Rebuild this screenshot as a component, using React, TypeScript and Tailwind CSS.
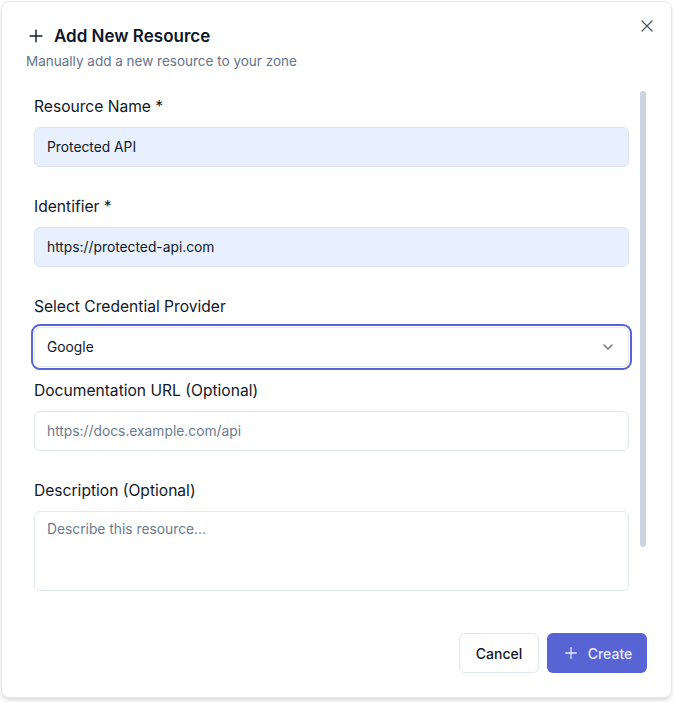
import { Plus, X, ChevronDown } from "lucide-react";

const labelCls = "block text-[15.6px] leading-6 text-[#111827] mb-2";
const inputCls =
  "w-full h-10 rounded-md border px-3 text-[13.8px] text-[#111827] outline-none placeholder:text-[#6b7a90]";

export default function App() {
  return (
    <div className="min-h-screen bg-white p-px font-['Inter',sans-serif]">
      <div className="relative flex h-[697px] w-[671px] flex-col rounded-lg border border-[#e2e8f0] bg-white px-6 pt-[22px] pb-6 shadow-md">
        {/* Close */}
        <button className="absolute right-[14px] top-[14px] text-[#4b5563]">
          <X size={20} strokeWidth={1.5} />
        </button>

        {/* Header */}
        <div className="flex items-center gap-2">
          <Plus size={20} strokeWidth={1.75} className="text-[#111827]" />
          <h2 className="text-[17px] font-semibold leading-6 text-[#0f172a]">Add New Resource</h2>
        </div>
        <p className="mt-[3px] text-[13.5px] leading-5 text-[#64748b]">
          Manually add a new resource to your zone
        </p>

        {/* Body */}
        <div className="mt-5 flex min-h-0 flex-1">
          <div className="flex-1 pl-2 pt-1">
            <div>
              <label className={labelCls}>Resource Name *</label>
              <input
                className={inputCls + " border-[#dbe4f0] bg-[#e8f0fe]"}
                defaultValue="Protected API"
              />
            </div>

            <div className="mt-7">
              <label className={labelCls}>Identifier *</label>
              <input
                className={inputCls + " border-[#dbe4f0] bg-[#e8f0fe]"}
                defaultValue="https://protected-api.com"
              />
            </div>

            <div className="mt-7">
              <label className={labelCls}>Select Credential Provider</label>
              <button className="flex h-10 w-full items-center justify-between rounded-md border border-[#e2e8f0] bg-white px-3 text-[13.8px] text-[#111827] ring-2 ring-[#5864d4] ring-offset-1">
                <span>Google</span>
                <ChevronDown size={16} className="text-[#6b7280]" />
              </button>
            </div>

            <div className="mt-3">
              <label className={labelCls}>Documentation URL (Optional)</label>
              <input
                className={inputCls + " border-[#e2e8f0] bg-white"}
                placeholder="https://docs.example.com/api"
              />
            </div>

            <div className="mt-7">
              <label className={labelCls}>Description (Optional)</label>
              <textarea
                className="block h-20 w-full resize-none rounded-md border border-[#e2e8f0] bg-white px-3 pt-[7px] text-[13.8px] leading-5 outline-none placeholder:text-[#6b7a90]"
                placeholder="Describe this resource..."
              />
            </div>
          </div>

          {/* Scrollbar thumb */}
          <div className="ml-[11px] mr-px h-[456px] w-1.5 rounded-full bg-[#cbd5e1]" />
        </div>

        {/* Footer */}
        <div className="flex justify-end gap-2 pt-6">
          <button className="flex h-10 w-20 items-center justify-center rounded-md border border-[#e2e8f0] bg-white text-[14px] font-medium text-[#0f172a]">
            Cancel
          </button>
          <button className="flex h-10 w-[100px] items-center justify-center gap-2 rounded-md bg-[#5864d4] text-[14px] font-medium text-[#e6e9ff]">
            <Plus size={18} strokeWidth={1.75} />
            Create
          </button>
        </div>
      </div>
    </div>
  );
}
